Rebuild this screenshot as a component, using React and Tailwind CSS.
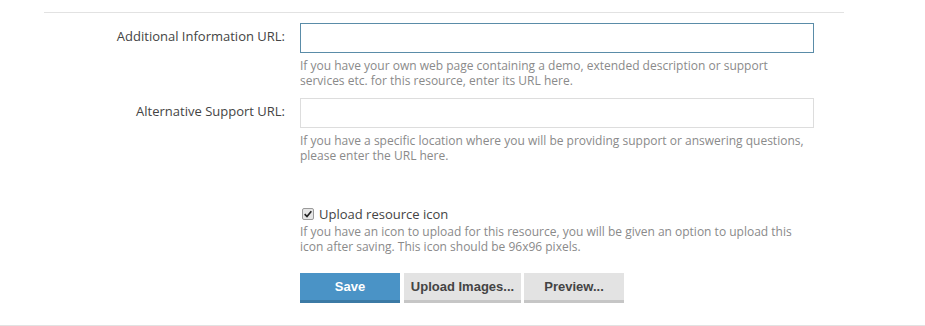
// Resource form footer: URL fields, icon option and action buttons
const FieldRow = ({ label, active, hint }) => (
    <div className="flex">
        <label className="w-[241px] shrink-0 pt-[2px] text-right text-[13px] leading-[22px] text-[#444]">
            {label}
        </label>
        <div className="ml-[15px] w-[514px]">
            <input
                type="text"
                className={
                    active
                        ? "block h-[30px] w-[514px] border border-[#5a8ca8] bg-white outline-none"
                        : "block h-[30px] w-[514px] border border-[#dddddd] bg-white outline-none"
                }
            />
            <p className="mt-[5px] text-[12px] leading-[15px] text-[#8a8a8a]">{hint}</p>
        </div>
    </div>
);

const App = () => (
    <div className="h-[326px] w-[925px] overflow-hidden bg-white font-['Open_Sans',sans-serif]">
        <div className="ml-[44px] mt-[12px] w-[800px] border-t border-[#e2e2e2] pt-[10px]">
            <FieldRow
                label="Additional Information URL:"
                active
                hint="If you have your own web page containing a demo, extended description or support services etc. for this resource, enter its URL here."
            />
            <div className="mt-[10px]">
                <FieldRow
                    label="Alternative Support URL:"
                    hint="If you have a specific location where you will be providing support or answering questions, please enter the URL here."
                />
            </div>

            <div className="ml-[256px] mt-[42px] w-[514px]">
                <label className="flex items-center text-[13px] leading-[18px] text-[#444]">
                    <span className="mr-[5px] ml-[2px] flex h-[12px] w-[12px] items-center justify-center rounded-[2px] border border-[#9a9a9a] bg-[#e6e6e6]">
                        <svg viewBox="0 0 12 12" className="h-[10px] w-[10px]">
                            <path d="M2 6.2 L4.8 9 L10 2.8" fill="none" stroke="#222" strokeWidth="2" />
                        </svg>
                    </span>
                    Upload resource icon
                </label>
                <p className="mt-[1px] text-[12px] leading-[15px] text-[#8a8a8a]">
                    If you have an icon to upload for this resource, you will be given an option to upload this icon after saving. This icon should be 96x96 pixels.
                </p>

                <div className="mt-[19px] flex gap-[3px] font-['Liberation_Sans',Arial,sans-serif] text-[13px] font-bold">
                    <button className="h-[30px] w-[100px] border-b-[3px] border-[#3c7aa5] bg-[#4a93c6] text-white">
                        Save
                    </button>
                    <button className="ml-[1px] h-[30px] w-[117px] border-b-[3px] border-[#c6c6c6] bg-[#e3e3e3] text-[#444]">
                        Upload Images...
                    </button>
                    <button className="h-[30px] w-[100px] border-b-[3px] border-[#c6c6c6] bg-[#e3e3e3] text-[#444]">
                        Preview...
                    </button>
                </div>
            </div>
        </div>
        <div className="mt-[22px] border-t border-[#e2e2e2]" />
    </div>
);

export default App;
